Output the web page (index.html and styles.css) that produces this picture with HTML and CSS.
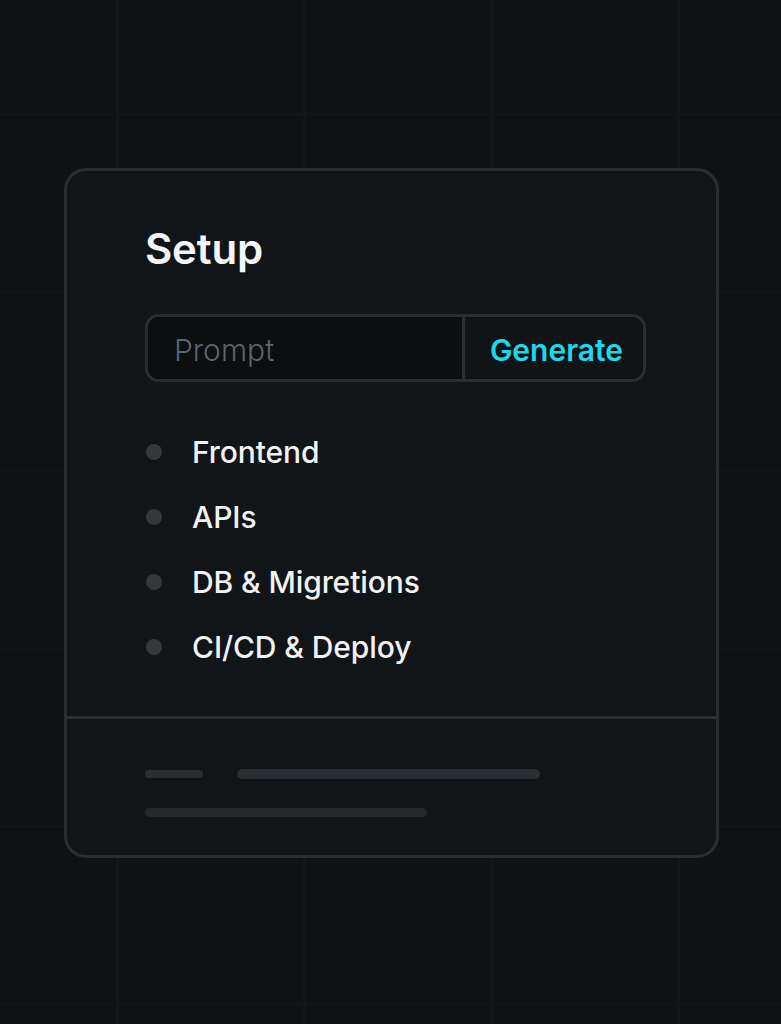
FILE: index.html
```html
<!DOCTYPE html>
<html lang="en">
<head>
  <meta charset="UTF-8">
  <meta name="viewport" content="width=device-width, initial-scale=1.0">
  <title>Setup</title>
  <link rel="stylesheet" href="styles.css">
</head>
<body>
  <div class="card">
    <div class="card-main">
      <h1 class="title">Setup</h1>

      <div class="prompt-box">
        <input class="prompt-input" type="text" placeholder="Prompt">
        <button class="generate-btn">Generate</button>
      </div>

      <ul class="steps">
        <li><span class="dot"></span>Frontend</li>
        <li><span class="dot"></span>APIs</li>
        <li><span class="dot"></span>DB &amp; Migretions</li>
        <li><span class="dot"></span>CI/CD &amp; Deploy</li>
      </ul>
    </div>

    <div class="card-footer">
      <div class="bar-row">
        <span class="bar bar-short"></span>
        <span class="bar bar-long"></span>
      </div>
      <div class="bar-row">
        <span class="bar bar-mid"></span>
      </div>
    </div>
  </div>
</body>
</html>
```

FILE: styles.css
```css
html, body {
  margin: 0;
  height: 100%;
}
body {
  font-family: Inter, "Noto Sans", sans-serif;
  background-color: #0f1113;
  background-image:
    repeating-linear-gradient(90deg, transparent 0 116px, #131619 116px 119px, transparent 119px 187px),
    repeating-linear-gradient(180deg, transparent 0 113px, #121518 113px 116px, transparent 116px 178px);
  background-size: 187px 100%, 100% 178px;
  padding: 168px 0 0 64px;
  box-sizing: border-box;
}
.card {
  width: 655px;
  height: 690px;
  box-sizing: border-box;
  border: 3px solid #2a2e32;
  border-radius: 22px;
  background: #121518;
  display: flex;
  flex-direction: column;
  overflow: hidden;
}
.card-main {
  height: 545px;
  box-sizing: border-box;
  padding: 53px 70px 0 78px;
}
.title {
  margin: 0;
  font-size: 42px;
  line-height: 50px;
  font-weight: 600;
  color: #f4f5f6;
  letter-spacing: -0.2px;
}
.prompt-box {
  margin-top: 40px;
  width: 501px;
  height: 68px;
  box-sizing: border-box;
  border: 3px solid #2a2e32;
  border-radius: 14px;
  display: flex;
  overflow: hidden;
}
.prompt-input {
  flex: 1;
  min-width: 0;
  border: none;
  border-right: 3px solid #2a2e32;
  background: #0c0e10;
  padding: 3px 0 0 26px;
  font-family: Inter, "Noto Sans", sans-serif;
  font-size: 30px;
  font-weight: 300;
  color: #c8cdd1;
  outline: none;
}
.prompt-input::placeholder {
  color: #5a646b;
}
.generate-btn {
  width: 178px;
  border: none;
  background: #111417;
  color: #1fd6ea;
  font-family: Inter, "Noto Sans", sans-serif;
  font-size: 30px;
  font-weight: 600;
  padding: 3px 0 0 5px;
  text-align: center;
}
.steps {
  list-style: none;
  margin: 37px 0 0;
  padding: 0;
}
.steps li {
  height: 65px;
  display: flex;
  align-items: center;
  font-size: 30px;
  font-weight: 500;
  color: #f1f2f3;
  letter-spacing: -0.1px;
}
.dot {
  width: 16px;
  height: 16px;
  border-radius: 50%;
  background: #35383b;
  margin: 0 30px 0 1px;
  flex: none;
}
.card-footer {
  flex: 1;
  border-top: 3px solid #2a2e32;
  padding: 50px 0 0 78px;
  display: flex;
  flex-direction: column;
  gap: 29px;
}
.bar-row {
  display: flex;
  gap: 34px;
  align-items: center;
}
.bar {
  display: block;
  height: 9px;
  border-radius: 5px;
  background: #292e32;
}
.bar-short {
  width: 58px;
  height: 8px;
}
.bar-long {
  width: 303px;
  height: 10px;
}
.bar-mid {
  width: 282px;
  background: #24282b;
}
```
